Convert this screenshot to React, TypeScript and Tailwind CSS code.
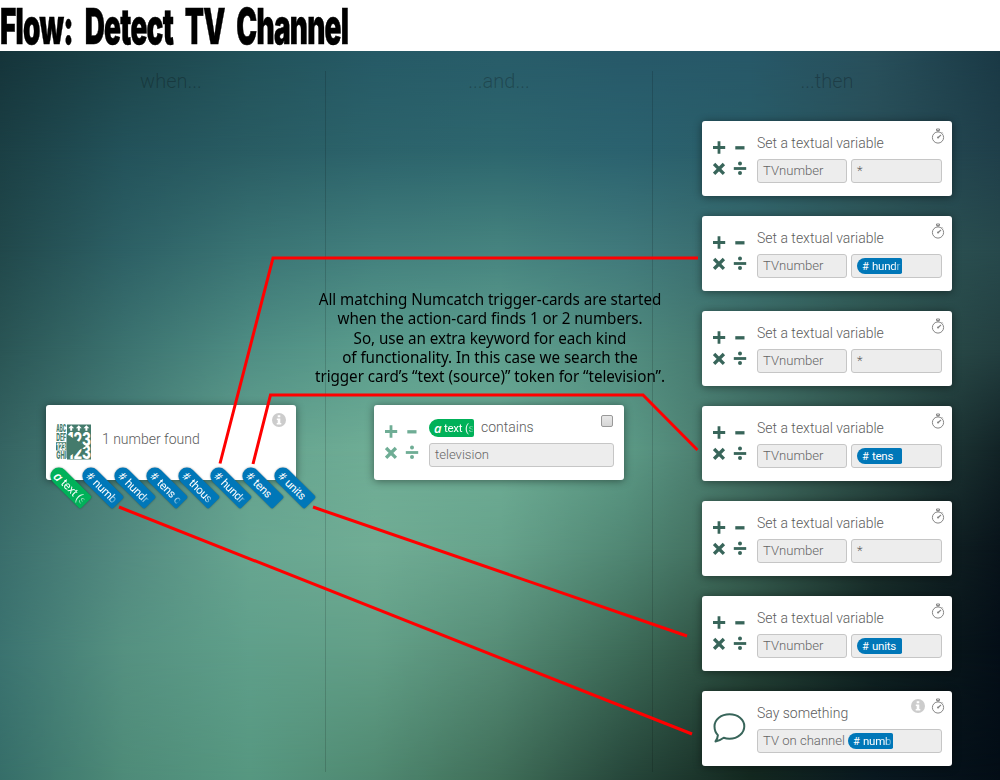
import React from 'react';

const MESH_Y = [0, 99, 199, 299, 399, 499, 599, 729];
const MESH = [
  ['#15343a', '#1c444a', '#22525a', '#265a66', '#285c69', '#275969', '#275868', '#284f5b', '#1a3945'],
  ['#1b3f44', '#23525a', '#295c63', '#2c636b', '#2d666e', '#2b626f', '#2a5d68', '#294f58', '#1f3f4a'],
  ['#21484b', '#2d6065', '#3a7474', '#427f7d', '#46847f', '#40797b', '#386a6c', '#2f5857', '#27494c'],
  ['#2a5555', '#3c7370', '#4f8e84', '#5b9d8d', '#5f9f8f', '#528d80', '#3f7068', '#305650', '#233f40'],
  ['#356462', '#4b827a', '#65a38f', '#6fad95', '#6ead95', '#5c9a86', '#436f64', '#2c4d47', '#122326'],
  ['#3a6e6c', '#538b81', '#68a691', '#70ac94', '#66a28b', '#508673', '#3a6355', '#1c322e', '#08131a'],
  ['#3b7370', '#559181', '#5f9f8a', '#629f87', '#558b75', '#3d6b58', '#274539', '#102220', '#040e17'],
  ['#366e69', '#4e8b78', '#569780', '#4f8870', '#3f6d58', '#26463a', '#13271f', '#091820', '#030d16'],
];

const Backdrop = () => (
  <div className="absolute inset-0 -z-10 flex flex-col">
    {MESH.slice(0, -1).map((row, i) => (
      <div key={i} className="relative" style={{ height: MESH_Y[i + 1] - MESH_Y[i], background: `linear-gradient(to right, ${row.join(',')})` }}>
        <div
          className="absolute inset-0 mask-[linear-gradient(to_bottom,transparent,black)]"
          style={{ background: `linear-gradient(to right, ${MESH[i + 1].join(',')})` }}
        />
      </div>
    ))}
  </div>
);

const MathIcon = ({ className }: { className: string }) => (
  <svg viewBox="0 0 34 34" className={`h-[34px] w-[34px] ${className}`} fill="none" stroke="currentColor" strokeWidth="2.8">
    <path d="M6 0.3v12.4M-0.2 6.5h12.4" />
    <path d="M22.3 6.8h9.2" strokeWidth="3.3" />
    <path d="M1.1 23l9.8 9.8M10.9 23l-9.8 9.8" strokeWidth="3.3" />
    <path d="M20.800 27.500h12.400" />
    <circle cx="27" cy="22.4" r="2" fill="currentColor" stroke="none" />
    <circle cx="27" cy="32" r="2" fill="currentColor" stroke="none" />
  </svg>
);

const Stopwatch = () => (
  <svg viewBox="0 0 14 16" className="h-4 w-3.5 text-[#858585]" fill="none" stroke="currentColor">
    <circle cx="7" cy="9.5" r="5.6" />
    <path d="M5.500 1h3v1.600h-3zM7 2.500v1.500M11 4.400l.8.8" />
    <path d="M7 9.700l3-2.800" strokeWidth="1.2" />
    <circle cx="7" cy="9.5" r="1" fill="currentColor" stroke="none" />
  </svg>
);

const Info = () => (
  <svg viewBox="0 0 14 14" className="size-3.5">
    <circle cx="7" cy="7" r="7" fill="#ccc" />
    <path d="M5.700 2.300h2.600v2H5.700zM4.800 5.500h3.500v4.600h1v1.400H4.700v-1.400h1V6.900h-.9z" fill="#fff" />
  </svg>
);

const Bubble = () => (
  <svg viewBox="0 0 34 30" className="h-[30px] w-[34px] text-[#38655a]" fill="none" stroke="currentColor" strokeWidth="2" strokeLinejoin="round">
    <path d="M16.500 1.200c8.400 0 14.800 5.300 14.800 12S24.900 25.800 16.500 25.800c-2.200 0-4-.3-5.800-1C8.500 26.500 5.800 28 2.500 28.400c1.500-2.200 2.300-4.200 2.400-6.300C2.500 19.800 1.500 16.800 1.500 13.300 1.500 6.500 8.100 1.200 16.500 1.200z" />
  </svg>
);

const NumcatchIcon = () => (
  <svg viewBox="0 0 36 36" className="size-9 text-[#447b6c]" fill="currentColor">
    <g fontFamily="Inter" fontWeight="800" fontSize="9.800">
      <text x="0.300" y="8" textLength="9.800" lengthAdjust="spacingAndGlyphs">ABC</text>
      <text x="0.300" y="16.900" textLength="9.800" lengthAdjust="spacingAndGlyphs">DEF</text>
      <rect x="0" y="18.200" width="10.400" height="8.200" />
      <text x="0.500" y="25.600" textLength="9.400" lengthAdjust="spacingAndGlyphs" fill="#fff" fontSize="9.200">123</text>
      <text x="0.300" y="35" textLength="9.800" lengthAdjust="spacingAndGlyphs">GHI</text>
    </g>
    <rect x="11" y="0.500" width="24" height="35" />
    <path d="M15.200 1.300l2.900 3h-1.900v2.400h-2V4.300h-1.900zM22.800 1.300l2.900 3h-1.900v2.400h-2V4.300h-1.900zM30.400 1.300l2.900 3h-1.900v2.400h-2V4.300h-1.900z" fill="#fff" />
    <g fill="#fff" fontFamily="Inter" fontWeight="800" fontSize="18.500">
      <text x="11.500" y="21.500" textLength="23.500" lengthAdjust="spacingAndGlyphs">123</text>
      <text x="11.500" y="35.300" textLength="23.500" lengthAdjust="spacingAndGlyphs">123</text>
    </g>
    <path d="M10.500 10v24l19.500-12z" />
  </svg>
);

type TagProps = { label: string; kind?: 'text' | 'number'; fade?: boolean; className?: string };

const Tag = ({ label, kind = 'number', fade = false, className = 'h-4 w-[45px]' }: TagProps) => (
  <span
    className={`flex shrink-0 items-center overflow-hidden rounded-l-[9px] rounded-r-[2px] pl-[5px] text-[11.500px] leading-4 font-normal whitespace-nowrap text-white ${kind === 'text' ? 'bg-[#00b159]' : 'bg-[#0077b8]'} ${className}`}
  >
    <span className={kind === 'text' ? "w-2.5 font-['Open_Sans',sans-serif] text-[13px] font-semibold italic" : 'w-2.5 pt-0.5 text-[11px]'}>{kind === 'text' ? 'a' : '#'}</span>
    <span className={`w-[29px] overflow-hidden tracking-[-0.25px] ${fade ? 'mask-[linear-gradient(to_right,black_75%,rgba(0,0,0,0.2)_100%)]' : ''}`}>{label}</span>
  </span>
);

const Field = ({ children, className = '' }: { children: React.ReactNode; className?: string }) => (
  <div className={`flex h-6 items-center rounded-[3px] border border-[#c6c6c6] bg-[#ededed] px-[5px] text-[13.100px] text-[#666] ${className}`}>{children}</div>
);

const Card = ({ icon, corner, children }: { icon: React.ReactNode; corner: React.ReactNode; children: React.ReactNode }) => (
  <article className="relative flex h-[75px] w-[250px] rounded-[3px] bg-white shadow-[0_1px_8px_rgba(0,0,0,0.45)]">
    <div className="w-[55px] shrink-0 pl-[11px]">{icon}</div>
    <div className="w-[185px]">{children}</div>
    <div className="absolute top-[7px] right-[7px] flex items-center gap-1.5">{corner}</div>
  </article>
);

const VariableCard = ({ tag, fade }: { tag?: string; fade?: boolean }) => (
  <Card icon={<MathIcon className="mt-[20px] text-[#38655a]" />} corner={<Stopwatch />}>
    <p className="mt-3 mb-1.5 text-[14px] leading-5 text-[#5c5c5c]">Set a textual variable</p>
    <div className="flex gap-1">
      <Field className="w-[90px]">TVnumber</Field>
      <Field className="w-[91px]">{tag ? <Tag label={tag} fade={fade} /> : '*'}</Field>
    </div>
  </Card>
);

const TOKENS: TagProps[] = [
  { label: 'text (s', kind: 'text', fade: true },
  { label: 'numb', fade: true },
  { label: 'hundr', fade: true },
  { label: 'tens o', fade: true },
  { label: 'thous', fade: true },
  { label: 'hundr', fade: true },
  { label: 'tens' },
  { label: 'units' },
];

const Heading = ({ children }: { children: string }) => (
  <h2 className="h-[50px] w-[250px] text-center text-[20px] leading-[20px] font-light text-black/25">{children}</h2>
);

export default function App() {
  return (
    <div className="h-[780px] w-[1000px] overflow-hidden bg-white font-['Roboto',sans-serif] font-light">
      <header className="h-[51px]">
        <h1 className="w-max origin-left scale-x-[0.57] pt-px font-['Inter',sans-serif] text-[49px] leading-[51px] font-black tracking-[-1.300px] whitespace-nowrap text-black [-webkit-text-stroke:0.5px_black] [word-spacing:12px]">
          Flow: Detect TV Channel
        </h1>
      </header>
      <main className="relative isolate flex h-[729px] pt-5 pb-2">
        <Backdrop />
        <section className="w-[326px] border-r border-black/15 pl-[46px]">
          <Heading>when...</Heading>
          <div className="relative mt-[284px]">
            <Card icon={<div className="-ml-px pt-[19px]"><NumcatchIcon /></div>} corner={<span className="mr-[3px] mt-px"><Info /></span>}>
              <p className="mt-[24px] ml-px text-[14px] leading-5 text-[#5c5c5c]">1 number found</p>
            </Card>
            <div className="absolute top-[73px] left-0 flex">
              {TOKENS.map((t, i) => (
                <div key={i} className="w-8">
                  <Tag {...t} className="h-[17px] w-[47px] rotate-45 shadow-[0_0_2px_rgba(0,0,0,0.4)]" />
                </div>
              ))}
            </div>
          </div>
        </section>
        <section className="w-[327px] border-r border-black/15 pl-[48px]">
          <Heading>...and...</Heading>
          <div className="mt-[284px]">
            <Card
              icon={<MathIcon className="mt-[20px] text-[#6fad95]" />}
              corner={<span className="mt-[3px] mr-1 size-3 rounded-[2px] border border-[#999] bg-linear-to-b from-[#e8e8e8] to-[#d6d6d6]" />}
            >
              <div className="mt-[13px] mb-[6px] flex h-[19px] items-center gap-[7px] text-[14px] text-[#5c5c5c]">
                <Tag label="text (s" kind="text" fade className="h-[18px] w-[45px]" />
                contains
              </div>
              <Field>television</Field>
            </Card>
          </div>
        </section>
        <section className="w-[347px] pl-[49px]">
          <Heading>...then</Heading>
          <div className="flex flex-col gap-5">
            <VariableCard />
            <VariableCard tag="hundr" fade />
            <VariableCard />
            <VariableCard tag="tens" />
            <VariableCard />
            <VariableCard tag="units" />
            <Card icon={<div className="pt-[22px]"><Bubble /></div>} corner={<><Info /><Stopwatch /></>}>
              <p className="mt-3 mb-1.5 text-[14px] leading-5 text-[#5c5c5c]">Say something</p>
              <Field><span className="mr-[3px]">TV on channel</span><Tag label="numb" fade /></Field>
            </Card>
          </div>
        </section>
        <p className="absolute top-[239px] left-[290px] w-[400px] scale-x-[0.95] text-center font-['Noto_Sans',sans-serif] text-[16px] leading-[19.300px] font-normal tracking-[-0.05px] text-black">
          All matching Numcatch trigger-cards are started<br />
          when the action-card finds 1 or 2 numbers.<br />
          So, use an extra keyword for each kind<br />
          of functionality. In this case we search the<br />
          trigger card’s “text (source)” token for “television”.
        </p>
        <svg viewBox="0 51 1000 729" className="absolute inset-0 h-[729px] w-[1000px]" fill="none" stroke="#f00" strokeWidth="3">
          <path d="M220 463.500L273 258H698" />
          <path d="M253 464L270.500 395H643L697.500 450" />
          <path d="M119 507L692 734" />
          <path d="M313 507L687 636" />
        </svg>
      </main>
    </div>
  );
}
